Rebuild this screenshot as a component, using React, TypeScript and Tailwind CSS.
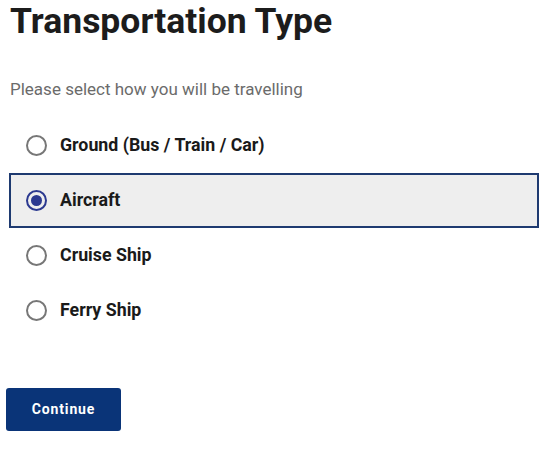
import React, { useState } from "react";

const options = ["Ground (Bus / Train / Car)", "Aircraft", "Cruise Ship", "Ferry Ship"];

export default function App() {
  const [sel, setSel] = useState(1);
  return (
    <div className="w-[550px] h-[463px] bg-white overflow-hidden" style={{ fontFamily: "Roboto, 'Liberation Sans', sans-serif" }}>
      <div className="pl-[10px]">
        <h1 className="text-[35.5px] leading-[42px] font-bold text-[#1c1c1c]">Transportation Type</h1>
        <p className="mt-[37px] text-[17px] leading-[20px] text-[#6b6b6b]">Please select how you will be travelling</p>
      </div>
      <div className="mt-[19px] flex flex-col pl-[9px] pr-[11px]">
        {options.map((o, i) => {
          const active = i === sel;
          return (
            <button
              key={o}
              onClick={() => setSel(i)}
              className={`flex items-center h-[55px] pl-[15px] text-left border-2 ${active ? "border-[#1e3a70] bg-[#eeeeee]" : "border-transparent bg-white"}`}
            >
              <span className={`w-[21px] h-[21px] rounded-full border-2 flex items-center justify-center ${active ? "border-[#2b3990]" : "border-[#777777]"}`}>
                {active && <span className="w-[11px] h-[11px] rounded-full bg-[#2b3990]" />}
              </span>
              <span className="ml-[13px] text-[17.8px] font-bold text-[#1a1a1a]">{o}</span>
            </button>
          );
        })}
      </div>
      <div className="pl-[6px] mt-[50px]">
        <button className="w-[115px] h-[43px] rounded-[3px] bg-[#0a3478] text-white text-[14px] font-bold tracking-[0.06em]">Continue</button>
      </div>
    </div>
  );
}
